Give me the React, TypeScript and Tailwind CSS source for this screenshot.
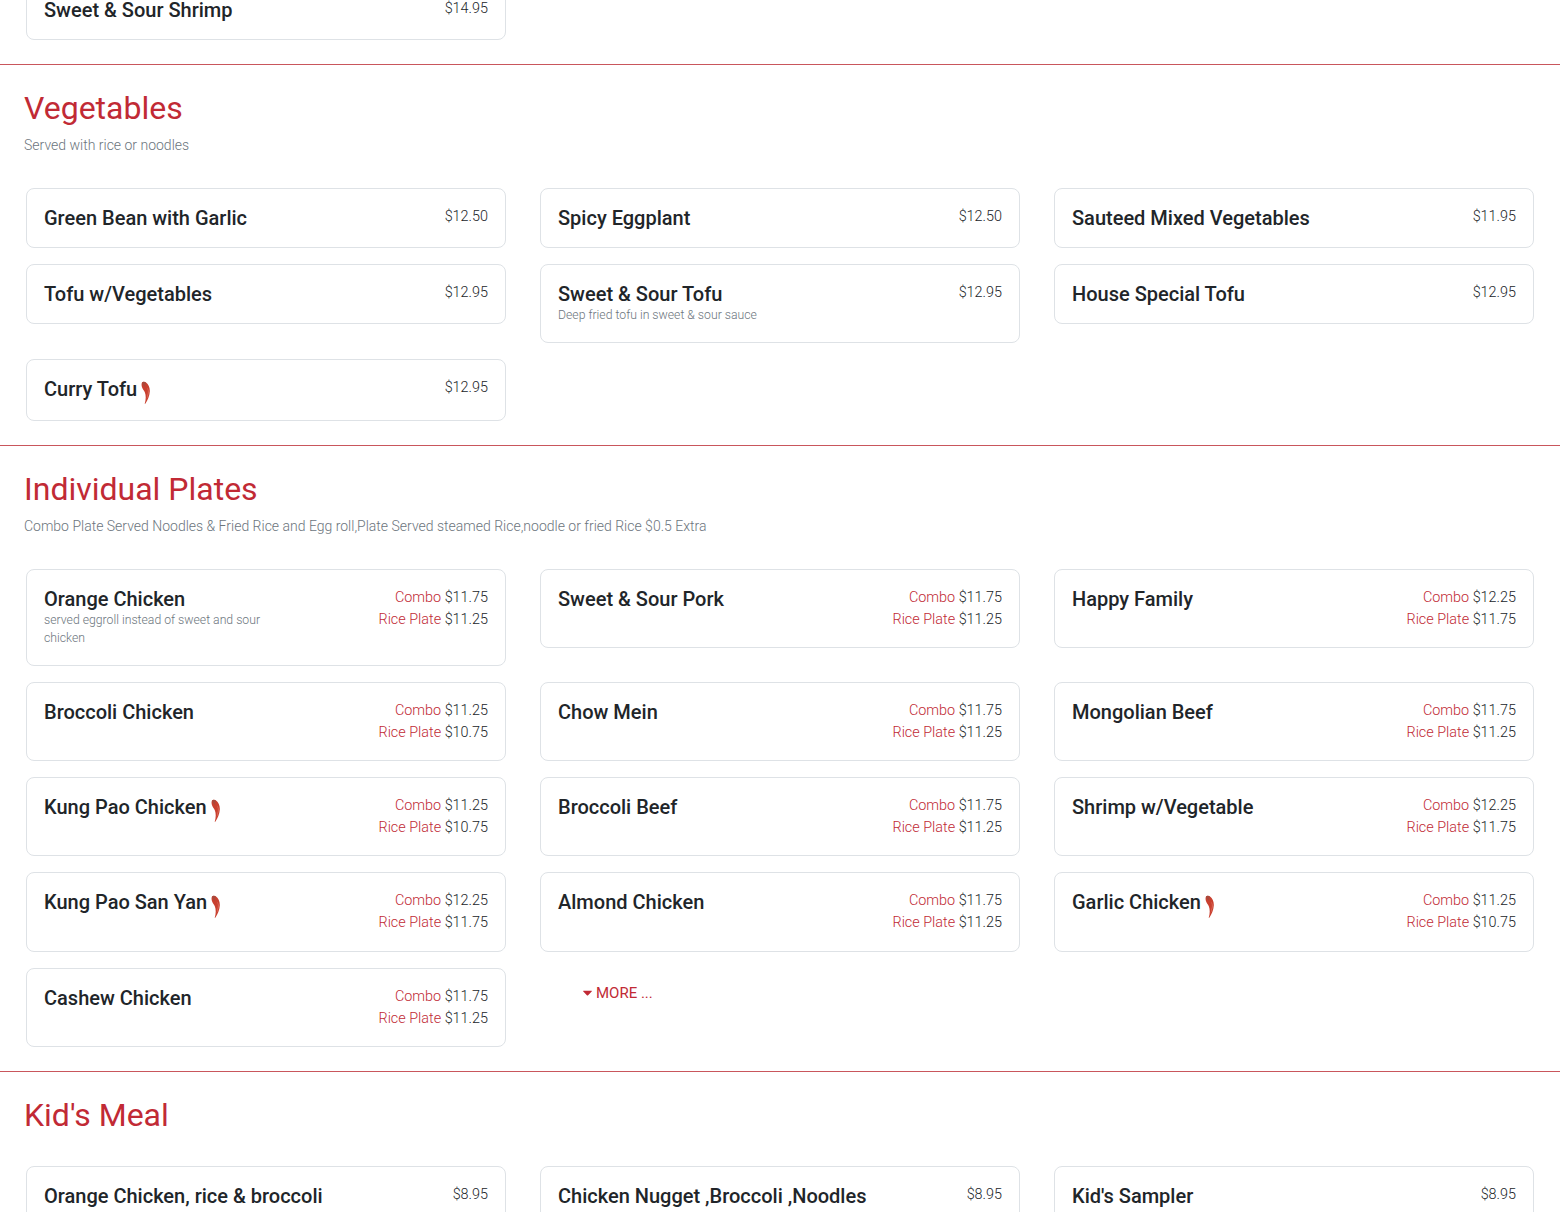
import React from 'react';
import { FaCaretDown } from 'react-icons/fa';

interface MenuItem {
  name: string;
  note?: string;
  price?: string;
  combo?: string;
  plate?: string;
  hot?: boolean;
}

const Chili = () => (
  <svg viewBox="0 0 9 23" className="inline-block w-[9px] h-[23px] ml-[4px] -mb-[4px]">
    <path d="M1 1.500C2 .5 3.800.6 5 1.500 7.600 3.400 9 6.800 8.800 10.500 8.600 15 6.600 19.500 4.300 22.800 4 23.100 3.700 22.900 3.800 22.500 5 18.500 5 14.500 3.900 11.500 3.200 9.500 1.400 8 .8 5.500.5 4 .4 2.600 1 1.500Z" fill="#c9402f" />
    <path d="M1 1.500C2 .5 3.800.6 5 1.500 4.200 2.500 3.900 4 4.300 6 2.800 5.300 1.300 3.600 1 1.500Z" fill="#a8493c" />
    <path d="M6.400 6.500c1 3.500.7 7.500-.8 11.500 2-3.500 2.700-8 .8-11.500Z" fill="#e8897a" />
  </svg>
);

const MenuCard = ({ item }: { item: MenuItem }) => (
  <div className="flex justify-between border border-[#dee2e6] rounded-[8px] bg-white px-[17px] pt-[16px] pb-[17px]">
    <div className="min-w-0">
      <h4 className={`mt-px text-[20px] leading-[24px] font-medium text-[#212529] whitespace-nowrap ${item.hot ? 'min-h-[26px]' : ''}`}>
        {item.name}
        {item.hot && <Chili />}
      </h4>
      {item.note && (
        <p className="text-[12.24px] leading-[18.500px] font-light text-[#6c757d] max-w-[240px]">{item.note}</p>
      )}
    </div>
    {item.price ? (
      <div className="mt-px text-[14.400px] leading-[21.600px] font-light text-[#212529] whitespace-nowrap">{item.price}</div>
    ) : (
      <div className="mt-px -mb-[0.600px] text-[14.400px] leading-[22px] font-light text-[#212529] text-right whitespace-nowrap">
        <div>
          <span className="text-[#c12a35]">Combo</span> {item.combo}
        </div>
        <div>
          <span className="text-[#c12a35]">Rice Plate</span> {item.plate}
        </div>
      </div>
    )}
  </div>
);

const Grid = ({ items, more }: { items: MenuItem[]; more?: boolean }) => (
  <div className="grid grid-cols-[480px_480px_480px] gap-x-[34px] px-[26px] items-start">
    {items.map((item) => (
      <div key={item.name} className="mb-[16px]">
        <MenuCard item={item} />
      </div>
    ))}
    {more && (
      <div className="flex items-center gap-[1px] pl-[40px] pt-[14px] text-[15px] leading-[22px] text-[#c12a35]">
        <FaCaretDown className="text-[15px]" />
        <span>MORE ...</span>
      </div>
    )}
  </div>
);

const Section = ({
  title,
  desc,
  items,
  more,
}: {
  title: string;
  desc?: string;
  items: MenuItem[];
  more?: boolean;
}) => (
  <section className="border-b border-[#c9565c] pt-[24px] pb-[8px]">
    <h2 className="px-[24px] text-[32px] leading-[38px] font-normal text-[#c12a35] mb-[8px]">{title}</h2>
    {desc ? (
      <p className="px-[24px] text-[14px] leading-[21px] font-light text-[#6c757d] mb-[32px]">{desc}</p>
    ) : (
      <div className="h-[24px]" />
    )}
    <Grid items={items} more={more} />
  </section>
);

const vegetables: MenuItem[] = [
  { name: 'Green Bean with Garlic', price: '$12.50' },
  { name: 'Spicy Eggplant', price: '$12.50' },
  { name: 'Sauteed Mixed Vegetables', price: '$11.95' },
  { name: 'Tofu w/Vegetables', price: '$12.95' },
  { name: 'Sweet & Sour Tofu', note: 'Deep fried tofu in sweet & sour sauce', price: '$12.95' },
  { name: 'House Special Tofu', price: '$12.95' },
  { name: 'Curry Tofu', price: '$12.95', hot: true },
];

const plates: MenuItem[] = [
  { name: 'Orange Chicken', note: 'served eggroll instead of sweet and sour chicken', combo: '$11.75', plate: '$11.25' },
  { name: 'Sweet & Sour Pork', combo: '$11.75', plate: '$11.25' },
  { name: 'Happy Family', combo: '$12.25', plate: '$11.75' },
  { name: 'Broccoli Chicken', combo: '$11.25', plate: '$10.75' },
  { name: 'Chow Mein', combo: '$11.75', plate: '$11.25' },
  { name: 'Mongolian Beef', combo: '$11.75', plate: '$11.25' },
  { name: 'Kung Pao Chicken', combo: '$11.25', plate: '$10.75', hot: true },
  { name: 'Broccoli Beef', combo: '$11.75', plate: '$11.25' },
  { name: 'Shrimp w/Vegetable', combo: '$12.25', plate: '$11.75' },
  { name: 'Kung Pao San Yan', combo: '$12.25', plate: '$11.75', hot: true },
  { name: 'Almond Chicken', combo: '$11.75', plate: '$11.25' },
  { name: 'Garlic Chicken', combo: '$11.25', plate: '$10.75', hot: true },
  { name: 'Cashew Chicken', combo: '$11.75', plate: '$11.25' },
];

const kids: MenuItem[] = [
  { name: 'Orange Chicken, rice & broccoli', price: '$8.95' },
  { name: 'Chicken Nugget ,Broccoli ,Noodles', price: '$8.95' },
  { name: "Kid's Sampler", price: '$8.95' },
];

const App: React.FC = () => {
  return (
    <div className="h-[1212px] overflow-hidden bg-white font-['Roboto',sans-serif]">
      <div className="-mt-[20px] border-b border-[#c9565c] pb-[8px]">
        <Grid items={[{ name: 'Sweet & Sour Shrimp', price: '$14.95' }]} />
      </div>
      <Section title="Vegetables" desc="Served with rice or noodles" items={vegetables} />
      <Section
        title="Individual Plates"
        desc="Combo Plate Served Noodles & Fried Rice and Egg roll,Plate Served steamed Rice,noodle or fried Rice $0.5 Extra"
        items={plates}
        more
      />
      <Section title="Kid's Meal" items={kids} />
    </div>
  );
};

export default App;
